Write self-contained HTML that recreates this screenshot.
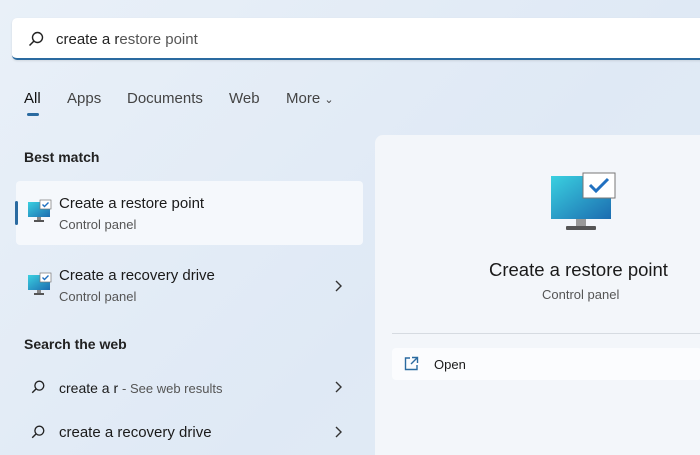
<!DOCTYPE html><html><head><style>
html,body{margin:0;width:700px;height:455px;overflow:hidden;background:#e4ecf6}
body{font-family:"Liberation Sans",sans-serif;background:linear-gradient(135deg,#e9f0f8,#dfe9f5 60%,#e4ecf6);position:relative;color:#1a1a1a}
.a{position:absolute;white-space:nowrap}
</style></head><body>
<div class="a" style="left:12px;top:18px;width:700px;height:40px;background:#fff;border-radius:5px;border-bottom:2px solid #2a6aa0;box-shadow:0 1px 2px rgba(0,0,0,.1)"></div>
<svg class="a" style="left:27px;top:30px" width="18" height="18" viewBox="0 0 18 18"><circle cx="10.5" cy="7.5" r="5" fill="none" stroke="#222" stroke-width="1.4"/><path d="M7 11 L2.5 15.5" stroke="#222" stroke-width="1.5"/></svg>
<div class="a" style="left:56px;top:31px;font-size:15px;color:#222">create a r<span style="color:#555">estore point</span></div>
<div class="a" style="left:24px;top:90px;font-size:15px;color:#111">All</div>
<div class="a" style="left:27px;top:113px;width:12px;height:3px;border-radius:2px;background:#2a6aa0"></div>
<div class="a" style="left:67px;top:90px;font-size:15px;color:#444">Apps</div>
<div class="a" style="left:127px;top:90px;font-size:15px;color:#444">Documents</div>
<div class="a" style="left:229px;top:90px;font-size:15px;color:#444">Web</div>
<div class="a" style="left:286px;top:90px;font-size:15px;color:#444">More <span style="font-size:11px">&#8964;</span></div>
<div class="a" style="left:24px;top:149px;font-size:14px;font-weight:bold;color:#222">Best match</div>
<div class="a" style="left:16px;top:181px;width:347px;height:64px;background:#f5f8fc;border-radius:4px"></div>
<div class="a" style="left:15px;top:201px;width:3px;height:24px;border-radius:2px;background:#2a6aa0"></div>
<svg class="a" style="left:27px;top:199px" width="26" height="26" viewBox="0 0 26 26"><defs><linearGradient id="g" x1="0" y1="0" x2="1" y2="1"><stop offset="0" stop-color="#3ad0e0"/><stop offset="1" stop-color="#1c6cb0"/></linearGradient></defs><rect x="1" y="3" width="22" height="15" fill="url(#g)"/><rect x="10" y="18" width="4" height="3" fill="#888"/><rect x="7" y="21" width="10" height="2" fill="#555"/><rect x="13" y="1" width="11" height="9" fill="#fff" stroke="#777" stroke-width=".7"/><path d="M15.5 5.5l2 2 4-4" stroke="#2070c0" fill="none" stroke-width="1.4"/></svg>
<div class="a" style="left:59px;top:195px;font-size:15px">Create a restore point</div>
<div class="a" style="left:59px;top:217px;font-size:13px;color:#555">Control panel</div>
<svg class="a" style="left:27px;top:272px" width="26" height="26" viewBox="0 0 26 26"><rect x="1" y="3" width="22" height="15" fill="url(#g)"/><rect x="10" y="18" width="4" height="3" fill="#888"/><rect x="7" y="21" width="10" height="2" fill="#555"/><rect x="13" y="1" width="11" height="9" fill="#fff" stroke="#777" stroke-width=".7"/><path d="M15.5 5.5l2 2 4-4" stroke="#2070c0" fill="none" stroke-width="1.4"/></svg>
<div class="a" style="left:59px;top:267px;font-size:15px">Create a recovery drive</div>
<div class="a" style="left:59px;top:289px;font-size:13px;color:#555">Control panel</div>
<svg class="a" style="left:334px;top:280px" width="8" height="12"><path d="M2 1l5 5-5 5" stroke="#333" fill="none" stroke-width="1.4"/></svg>
<div class="a" style="left:24px;top:336px;font-size:14px;font-weight:bold;color:#222">Search the web</div>
<svg class="a" style="left:30px;top:379px" width="16" height="16" viewBox="0 0 18 18"><circle cx="10.5" cy="7.5" r="5" fill="none" stroke="#222" stroke-width="1.5"/><path d="M7 11 L2.5 15.5" stroke="#222" stroke-width="1.6"/></svg>
<div class="a" style="left:59px;top:380px;font-size:14px">create a r <span style="font-size:13px;color:#555">- See web results</span></div>
<svg class="a" style="left:334px;top:381px" width="8" height="12"><path d="M2 1l5 5-5 5" stroke="#333" fill="none" stroke-width="1.4"/></svg>
<svg class="a" style="left:30px;top:424px" width="16" height="16" viewBox="0 0 18 18"><circle cx="10.5" cy="7.5" r="5" fill="none" stroke="#222" stroke-width="1.5"/><path d="M7 11 L2.5 15.5" stroke="#222" stroke-width="1.6"/></svg>
<div class="a" style="left:59px;top:424px;font-size:15px">create a recovery drive</div>
<svg class="a" style="left:334px;top:426px" width="8" height="12"><path d="M2 1l5 5-5 5" stroke="#333" fill="none" stroke-width="1.4"/></svg>
<div class="a" style="left:375px;top:135px;width:340px;height:330px;background:#f3f6fa;border-radius:8px"></div>
<svg class="a" style="left:550px;top:172px" width="66" height="60" viewBox="0 0 66 60"><rect x="1" y="4" width="60" height="43" fill="url(#g)"/><rect x="26" y="47" width="10" height="7" fill="#999"/><rect x="16" y="54" width="30" height="4" rx="1" fill="#555"/><rect x="33" y="1" width="32" height="25" fill="#fff" stroke="#777" stroke-width="1"/><path d="M40 13l6 6 12-12" stroke="#2070c0" fill="none" stroke-width="3"/></svg>
<div class="a" style="left:489px;top:259px;font-size:18.5px;color:#1a1a1a">Create a restore point</div>
<div class="a" style="left:542px;top:287px;font-size:13px;color:#555">Control panel</div>
<div class="a" style="left:392px;top:333px;width:310px;height:1px;background:#d6dbe1"></div>
<div class="a" style="left:392px;top:348px;width:310px;height:32px;background:#fbfcfe;border-radius:4px"></div>
<svg class="a" style="left:403px;top:356px" width="16" height="16" viewBox="0 0 16 16"><path d="M7 2H2.5v11.5H14V9" stroke="#2a6aa0" fill="none" stroke-width="1.4"/><path d="M9 1.5h5.5V7M14.5 1.5L8 8" stroke="#2a6aa0" fill="none" stroke-width="1.4"/></svg>
<div class="a" style="left:434px;top:357px;font-size:13px">Open</div>
</body></html>
